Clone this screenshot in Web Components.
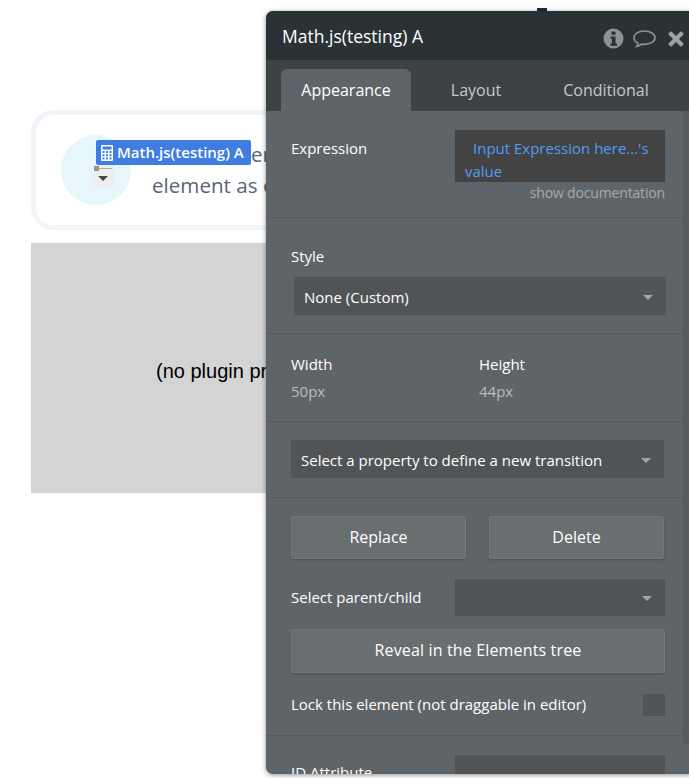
<!DOCTYPE html>
<html><head><meta charset="utf-8">
<style>
html,body{margin:0;height:100%;background:#fff;overflow:hidden}
body{font-family:"Open Sans",sans-serif}
</style></head><body>
<canvas-page></canvas-page>
<template id="t-page"><style>
:host{display:block;position:relative;width:689px;height:778px;overflow:hidden;background:#fff}
.stage{display:flex;flex-direction:column;gap:13px;padding:110px 0 0 31px;width:422px}
.mark{position:absolute;left:537px;top:8px;width:10px;height:4px;background:#222a3a}
</style><div class="stage"><plugin-card></plugin-card><plugin-preview></plugin-preview></div><div class="mark"></div><editor-panel></editor-panel></template>

<template id="t-card"><style>
:host{display:block;position:relative;box-sizing:border-box;height:120px;border:5px solid #f2f4f9;border-radius:22px;background:#fff}
.row{display:flex;align-items:center;height:100%;padding-left:25px;gap:21px}
.circle{width:70px;height:70px;border-radius:50%;background:#e6f6fa;flex:none}
.txt{font-size:20.6px;line-height:31px;color:#5a6478;white-space:nowrap;margin-top:-1px}
.txt div:first-child{padding-left:99px}
.label{position:absolute;left:60px;top:25px}
.handle{position:absolute;left:57px;top:50px}
</style><div class="row"><div class="circle"></div><div class="txt"><div>en</div><div>element as e</div></div></div><selection-label class="label"><slot></slot></selection-label><resize-handle class="handle"></resize-handle></template>

<template id="t-label"><style>
:host{display:flex;align-items:center;gap:4px;box-sizing:border-box;width:155px;height:25px;padding-left:5px;background:#3f7de0;border-radius:2px;color:#fff;font-size:15px;font-weight:600;white-space:nowrap}
svg{flex:none}
span{margin-top:-2px}
</style><svg width="12" height="16" viewBox="0 0 12 16"><path fill="#fff" fill-rule="evenodd" d="M1 0h10a1 1 0 0 1 1 1v14a1 1 0 0 1-1 1H1a1 1 0 0 1-1-1V1a1 1 0 0 1 1-1zM1.500 1.500v3h9v-3zM1.500 6v2h2V6zm3.500 0v2h2V6zm3.500 0v2h2V6zM1.500 9.200v2h2v-2zm3.500 0v2h2v-2zm3.500 0v2h2v-2zM1.500 12.400v2h2v-2zm3.500 0v2h2v-2zm3.500 0v2h2v-2z"/></svg><span>Math.js(testing) A</span></template>

<template id="t-handle"><style>
:host{display:block;width:21px;height:22px;background:#eee}
svg{display:block}
</style><svg width="21" height="22" viewBox="0 0 21 22"><path d="M4 3.500h15" stroke="#aaa" stroke-width="1"/><rect x="1.500" y="1.500" width="4" height="4" fill="#f08a1d" stroke="#5b9bd5"/><path d="M5 11h10l-5 5z" fill="#444"/></svg></template>

<template id="t-preview"><style>
:host{display:flex;align-items:center;height:250px;background:#d4d4d4;font:20px "Liberation Sans",Arial,sans-serif;color:#000;padding-left:125px;padding-top:7px;box-sizing:border-box;white-space:nowrap}
</style><span>(no plugin preview)</span></template>

<template id="t-panel"><style>
:host{position:absolute;left:266px;top:11px;width:430px;height:763px;display:flex;flex-direction:column;overflow:hidden;border-radius:7px 0 0 7px;background:#5f6468;color:#fff;font-size:15px;box-shadow:0 1px 5px rgba(0,0,0,.45)}
header{flex:none;box-sizing:border-box;height:49px;background:#2b3235;display:flex;align-items:center;padding-left:16px;position:relative}
h1{margin:0;font-size:17.5px;font-weight:400;flex:1}
.icons{position:absolute;left:337px;top:16px;display:flex;align-items:center}
nav{flex:none;box-sizing:border-box;height:51px;background:#3d4245;display:flex;padding:9px 0 0 15px;align-items:stretch}
nav span{width:130px;display:flex;align-items:center;justify-content:center;font-size:16px;color:#c5c9cc;padding-bottom:1px;box-sizing:border-box}
nav span.on{background:#5f6468;color:#fff;border-radius:6px 6px 0 0}
.scroll{flex:1;min-height:0;overflow:hidden}
section{box-sizing:border-box;border-bottom:1px solid #565a5e;padding-left:25px;width:417px}
.bar{position:absolute;left:417px;top:100px;width:6px;height:633px;background:#565b5f}
.s1{height:107px;display:grid;grid-template-columns:164px 210px;padding-top:19px;align-content:start}
.s1 label{padding-top:8px;line-height:20px}
.s1 .expr{box-sizing:border-box;background:#434343;height:52px;color:#4f9df5;line-height:23px;padding:7px 0 0 10px;border-radius:1px}
.s1 .expr div:first-child{padding-left:8px}
.doc{grid-column:1/3;text-align:right;color:#a7a9ab;font-size:14px;letter-spacing:-.16px;line-height:20px;margin-top:1px}
.s2{height:116px;padding-top:28px}
.s2 label{display:block;line-height:20px;margin-bottom:11px}
.s2 ui-select{width:372px;margin-left:3px}
.s3{height:88px;padding-top:19px;display:grid;grid-template-columns:188px 1fr;line-height:22px;align-content:start;row-gap:5px}
.s3 b{font-weight:400;color:#babdbf}
.s4{height:76px;padding-top:18px}
.s4 ui-select{width:373px}
.s5{height:238px;padding-top:18px;display:flex;flex-direction:column}
.btns{display:flex;gap:23px;width:373px}
.btns ui-button{width:175px;height:43px}
.pc{display:flex;align-items:center;justify-content:space-between;width:374px;margin-top:20px}
.pc span,.lock span{margin-top:-2px}
.pc ui-select{width:210px;height:37px}
.s5 .rev{width:374px;height:44px;margin-top:13px;letter-spacing:.15px}
.lock{display:flex;align-items:center;justify-content:space-between;width:374px;margin-top:21px}
.box{width:22px;height:22px;background:#505456}
.s6{border:0;display:grid;grid-template-columns:164px 210px;padding-top:19px}
.s6 label{padding-top:7px;line-height:20px}
.s6 div{height:60px;background:#505456}
</style>
<header><h1>Math.js(testing) A</h1><div class="icons"><panel-icons></panel-icons></div></header>
<nav><span class="on">Appearance</span><span>Layout</span><span>Conditional</span></nav>
<div class="scroll">
<section class="s1"><label>Expression</label><div class="expr"><div>Input Expression here...'s</div><div>value</div></div><div class="doc">show documentation</div></section>
<section class="s2"><label>Style</label><ui-select>None (Custom)</ui-select></section>
<section class="s3"><span>Width</span><span>Height</span><b>50px</b><b>44px</b></section>
<section class="s4"><ui-select>Select a property to define a new transition</ui-select></section>
<section class="s5"><div class="btns"><ui-button>Replace</ui-button><ui-button>Delete</ui-button></div>
<div class="pc"><span>Select parent/child</span><ui-select></ui-select></div>
<ui-button class="rev">Reveal in the Elements tree</ui-button>
<div class="lock"><span>Lock this element (not draggable in editor)</span><div class="box"></div></div></section>
<section class="s6"><label>ID Attribute</label><div></div></section>
</div><div class="bar"></div></template>

<template id="t-icons"><style>
:host{display:flex;align-items:center;gap:8px}
svg{display:block;flex:none}
</style>
<svg width="21" height="21" viewBox="0 0 21 21"><circle cx="10.500" cy="10.500" r="10" fill="#8a9497"/><path fill="#2b3235" d="M8.500 3.500h4v3.200h-4zM7.500 8.500h5v7h1.500v2.300H7.500v-2.300H9v-4.800H7.500z"/></svg>
<svg width="25" height="20" viewBox="0 0 24 20" style="margin-top:2px"><path fill="none" stroke="#8a9497" stroke-width="1.600" d="M12 2C6 2 1.500 4.900 1.500 8.700c0 2.300 1.600 4.300 4.200 5.500-.2 1.300-.8 2.400-1.500 3.300 1.900-.4 3.500-1.300 4.700-2.400 1 .2 2 .3 3.100.3 6 0 10.500-3 10.500-6.700S18 2 12 2z"/></svg>
<svg width="16" height="16" viewBox="0 0 17 17" style="margin-left:3px;margin-top:2px"><path fill="#9aa3a6" d="M4 .8l4.500 4.500L13 .8c.5-.5 1.200-.5 1.700 0l1.500 1.500c.5.500.5 1.200 0 1.700l-4.500 4.500 4.500 4.500c.5.500.5 1.200 0 1.700l-1.500 1.500c-.5.500-1.200.5-1.700 0l-4.500-4.500L4 16.200c-.5.500-1.200.5-1.700 0L.8 14.700c-.5-.5-.5-1.200 0-1.700l4.500-4.500L.8 4c-.5-.5-.5-1.200 0-1.700L2.300.8C2.800.3 3.500.3 4 .8z"/></svg></template>

<template id="t-select"><style>
:host{display:flex;align-items:center;box-sizing:border-box;height:38px;background:#505456;color:#fff;font-size:15px;padding:0 13px 0 10px;white-space:nowrap}
span{flex:1;padding-top:2px}
i{flex:none;width:0;height:0;margin-top:2px;border-left:5.500px solid transparent;border-right:5.500px solid transparent;border-top:5px solid #a4a7a9}
</style><span><slot></slot></span><i></i></template>

<template id="t-button"><style>
:host{display:flex;align-items:center;justify-content:center;box-sizing:border-box;background:#696e70;border:1px solid #74787a;border-radius:2px;color:#fff;font-size:16px;padding-bottom:2px;box-shadow:0 1px 2px rgba(0,0,0,.2)}
</style><slot></slot></template>

<script>
function def(name,tid){customElements.define(name,class extends HTMLElement{constructor(){super();this.attachShadow({mode:'open'}).appendChild(document.getElementById(tid).content.cloneNode(true));}});}
def('canvas-page','t-page');def('plugin-card','t-card');def('selection-label','t-label');def('resize-handle','t-handle');def('plugin-preview','t-preview');def('editor-panel','t-panel');def('panel-icons','t-icons');def('ui-select','t-select');def('ui-button','t-button');
</script>
</body></html>
